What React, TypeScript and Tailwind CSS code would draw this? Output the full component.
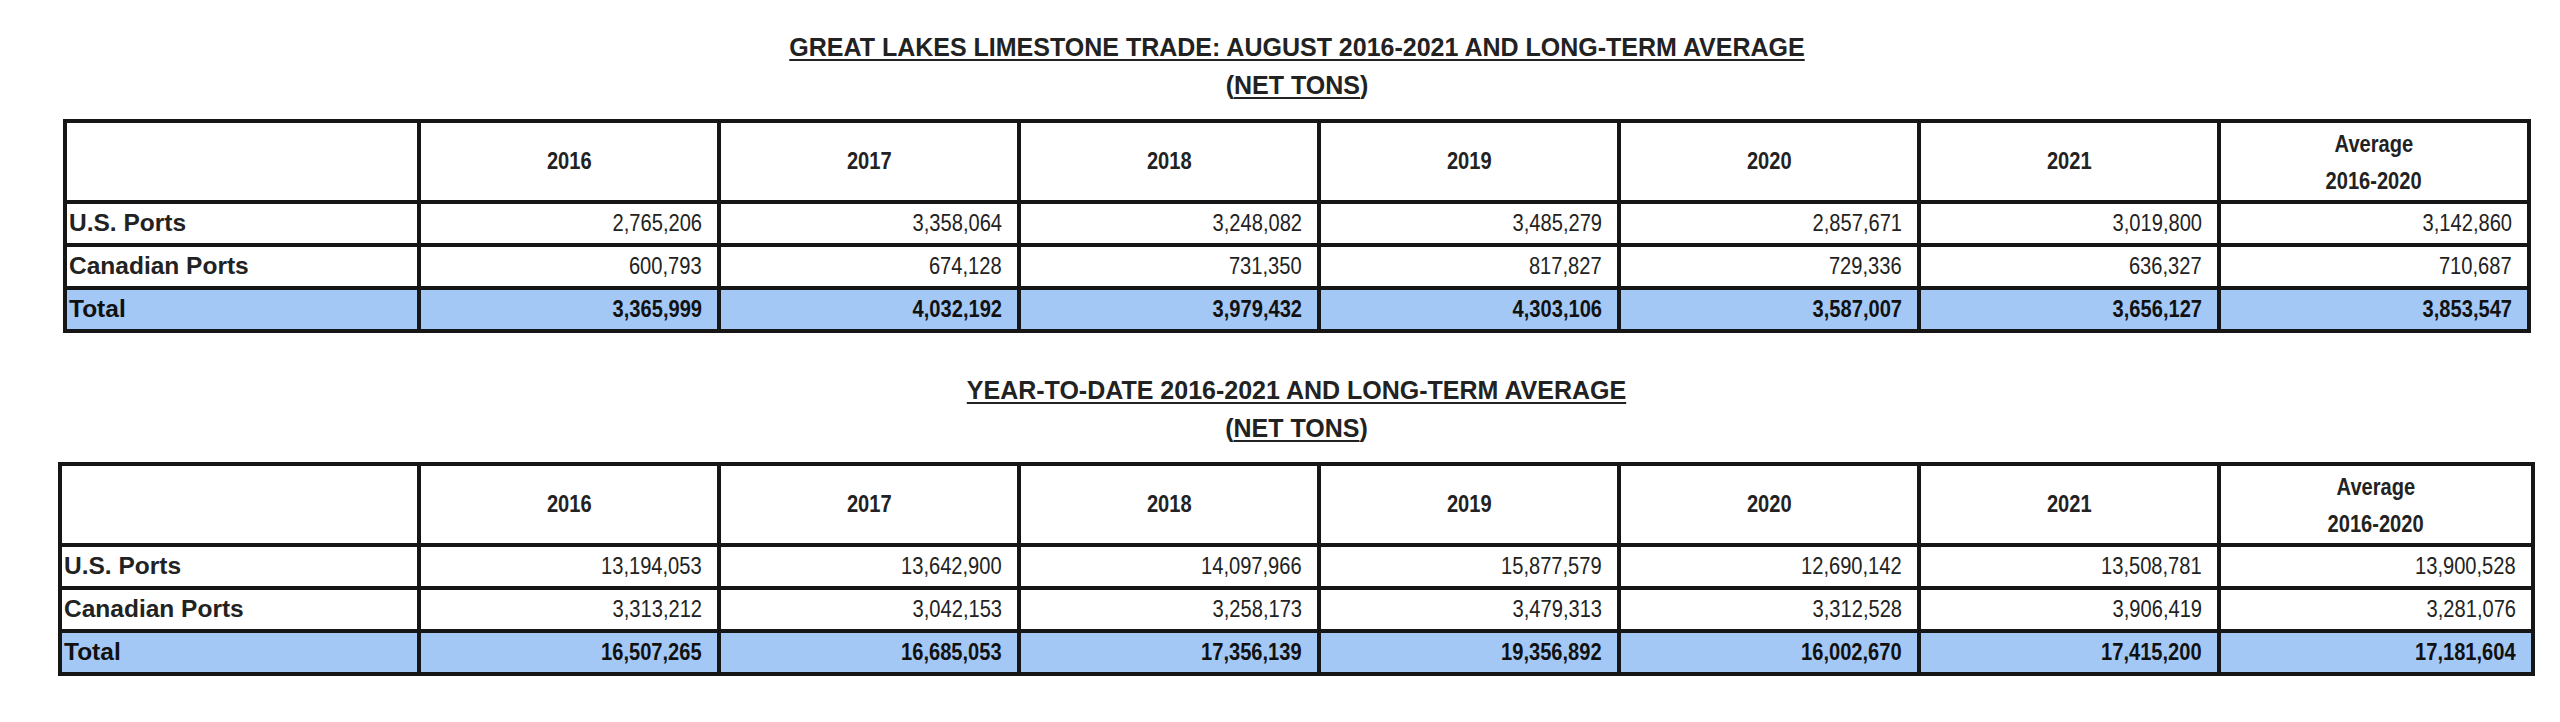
import React from 'react';

type Table = {
  title: string;
  us: string[];
  ca: string[];
  total: string[];
};

const years = ['2016', '2017', '2018', '2019', '2020', '2021'];

const august: Table = {
  title: 'GREAT LAKES LIMESTONE TRADE: AUGUST 2016-2021 AND LONG-TERM AVERAGE',
  us: ['2,765,206', '3,358,064', '3,248,082', '3,485,279', '2,857,671', '3,019,800', '3,142,860'],
  ca: ['600,793', '674,128', '731,350', '817,827', '729,336', '636,327', '710,687'],
  total: ['3,365,999', '4,032,192', '3,979,432', '4,303,106', '3,587,007', '3,656,127', '3,853,547'],
};

const ytd: Table = {
  title: 'YEAR-TO-DATE 2016-2021 AND LONG-TERM AVERAGE',
  us: ['13,194,053', '13,642,900', '14,097,966', '15,877,579', '12,690,142', '13,508,781', '13,900,528'],
  ca: ['3,313,212', '3,042,153', '3,258,173', '3,479,313', '3,312,528', '3,906,419', '3,281,076'],
  total: ['16,507,265', '16,685,053', '17,356,139', '19,356,892', '16,002,670', '17,415,200', '17,181,604'],
};

function Title({ text }: { text: string }) {
  return (
    <div className="text-center text-[25px] leading-[38px] font-bold text-[#222]">
      <div className="underline decoration-2 underline-offset-[3px]">{text}</div>
      <div>
        (<span className="underline decoration-2 underline-offset-[3px]">NET TONS</span>)
      </div>
    </div>
  );
}

function Row({ label, values, total }: { label: string; values: string[]; total?: boolean }) {
  const bg = total ? 'bg-[#a4c8f5]' : 'bg-white';
  return (
    <>
      <div className={`${bg} h-[39px] flex items-center pl-[2px] text-[24.5px] font-bold ${total ? 'text-[#111]' : 'text-[#222]'}`}>
        {label}
      </div>
      {values.map((v, i) => (
        <div
          key={i}
          className={`${bg} h-[39px] flex items-center justify-end pr-[15px] text-[24.5px] ${total ? 'font-bold text-[#111]' : 'text-[#222]'}`}
        >
          <span className="inline-block whitespace-nowrap scale-x-[0.82] origin-right">{v}</span>
        </div>
      ))}
    </>
  );
}

function TradeTable({ data, wide }: { data: Table; wide?: boolean }) {
  return (
    <div className={wide ? 'ml-[58px] w-[2477px]' : 'ml-[63px] w-[2468px]'}>
      <Title text={data.title} />
      <div
        className={`mt-[15px] grid gap-1 p-1 bg-[#161616] ${
          wide ? 'grid-cols-[355px_repeat(6,296px)_310px]' : 'grid-cols-[350px_repeat(6,296px)_306px]'
        }`}
      >
        <div className="bg-white h-[77px]" />
        {years.map(y => (
          <div
            key={y}
            className="bg-white h-[77px] flex items-center justify-center text-[24.5px] font-bold text-[#222]"
          >
            <span className="inline-block scale-x-[0.82]">{y}</span>
          </div>
        ))}
        <div className="bg-white h-[77px] flex flex-col items-center justify-center text-[24.5px] leading-[37px] font-bold text-[#222]">
          <span className="inline-block scale-x-[0.82]">Average</span>
          <span className="inline-block scale-x-[0.82]">2016-2020</span>
        </div>
        <Row label="U.S. Ports" values={data.us} />
        <Row label="Canadian Ports" values={data.ca} />
        <Row label="Total" values={data.total} total />
      </div>
    </div>
  );
}

export default function App() {
  return (
    <div className="w-[2560px] h-[722px] bg-white pt-[28px] font-['Liberation_Sans',Arial,sans-serif]">
      <TradeTable data={august} />
      <div className="mt-[38px]">
        <TradeTable data={ytd} wide />
      </div>
    </div>
  );
}
